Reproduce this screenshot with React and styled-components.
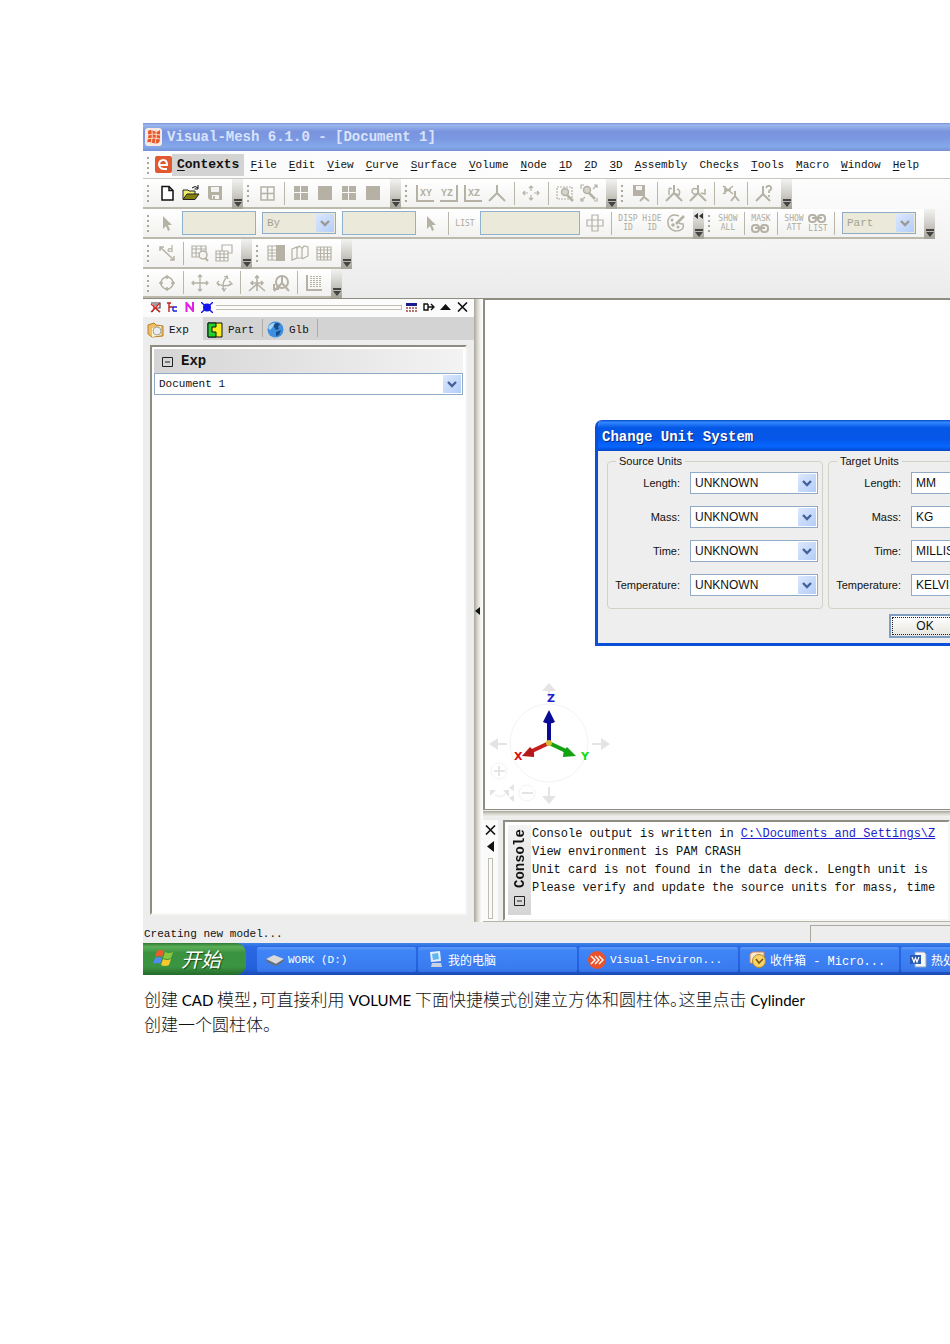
import React from "react";
import styled, { createGlobalStyle, css } from "styled-components";

const mono = `"Liberation Mono", "Noto Sans CJK SC", monospace`;
const sans = `"Liberation Sans", "Noto Sans CJK SC", sans-serif`;
const dim = "#b5b2a5";

const Global = createGlobalStyle`
  *, *::before, *::after { box-sizing: border-box; }
  body { margin: 0; background: #fff; }
  button, input, select { font: inherit; color: inherit; margin: 0; border-radius: 0; }
  svg { display: block; flex: none; }
`;

const Page = styled.main`
  padding: 123px 0 60px 143px;
  overflow: hidden;
`;

const AppWindow = styled.section`
  display: flex;
  flex-direction: column;
  overflow: hidden;
  background: #ededed;
  font-family: ${mono};
  font-size: 11px;
  color: #111;
  white-space: nowrap;
`;

const TitleBar = styled.header`
  display: flex;
  align-items: center;
  gap: 5px;
  height: 28px;
  padding-left: 2px;
  background: linear-gradient(#7f97d8, #9ab6ee 8%, #7a94de 30%, #7b98e2 55%, #84a8ea 85%, #7690d6);
  color: #d8e3fb;
  font-size: 14px;
  font-weight: bold;
`;

const Title = styled.h1`
  margin: 0;
  font: inherit;
`;

const MenuBar = styled.nav`
  display: flex;
  align-items: center;
  height: 28px;
  background: linear-gradient(90deg, #fbfbfb, #fff);
  border-bottom: 1px solid #c9c7bd;
`;

const MenuButton = styled.button`
  height: 22px;
  padding: 0 ${(p) => (p.$active ? 5 : 6)}px;
  border: 0;
  background: ${(p) => (p.$active ? "#d3d3d3" : "transparent")};
  font-size: ${(p) => (p.$active ? 13 : 11)}px;
  font-weight: ${(p) => (p.$active ? "bold" : "normal")};
  & u { text-underline-offset: 2px; }
`;

const Grip = styled.span`
  flex: none;
  width: 12px;
  height: 20px;
  background: linear-gradient(#aaa89c, #aaa89c) 4px 1px / 2px 100% no-repeat;
  mask: repeating-linear-gradient(transparent 0 2px, #000 2px 4px, transparent 4px 5px);
`;

const ToolArea = styled.div`
  display: flex;
  flex-direction: column;
  background: linear-gradient(#fdfdfd, #ebebeb);
  border-bottom: 1px solid #8f8d82;
`;

const ToolRow = styled.div`
  display: flex;
  height: 30px;
  &:last-child { height: 29px; }
`;

const Toolbar = styled.div`
  display: flex;
  align-items: center;
  flex: none;
  background: linear-gradient(#fff, #f1f1f0);
  border-bottom: 2px solid #bcb9ad;
`;

const ToolButton = styled.button`
  display: flex;
  align-items: center;
  justify-content: center;
  flex: none;
  width: 24px;
  height: 24px;
  padding: 0;
  border: 0;
  background: none;
  color: #aeab9e;
`;

const TinyLabel = styled.span`
  font-family: "DejaVu Sans Mono", monospace;
  font-size: 8px;
  line-height: 9px;
  text-align: center;
`;

const Divider = styled.span`
  flex: none;
  width: 1px;
  height: 23px;
  margin: 0 4px 0 ${(p) => (p.$wide ? 5 : 4)}px;
  background: #b9b6aa;
`;

const Overflow = styled.button`
  display: flex;
  flex-direction: column;
  align-items: center;
  justify-content: ${(p) => (p.$more ? "space-between" : "flex-end")};
  flex: none;
  align-self: stretch;
  width: 11px;
  margin-left: 5px;
  margin-bottom: -2px;
  padding: 4px 0 2px;
  border: 0;
  background: linear-gradient(#f2f2f1, #d2d1cb 45%, #a5a297);
`;

const Field = styled.input`
  flex: none;
  width: ${(p) => p.$w}px;
  height: 24px;
  margin: 0 3px;
  border: 1px solid #8fb0cf;
  background: #ebe9d9;
`;

const ComboWrap = styled.span`
  position: relative;
  display: flex;
  flex: none;
  width: ${(p) => (p.$w ? p.$w + "px" : "100%")};
  height: 22px;
  margin: 0 ${(p) => (p.$off ? 3 : 0)}px;
`;

const ComboSelect = styled.select`
  appearance: none;
  width: 100%;
  height: 100%;
  padding: 0 20px 0 4px;
  border: 1px solid #8fabc8;
  background: #fff;
  ${(p) =>
    p.disabled &&
    css`
      background: #ebe9d9;
      color: #a5a293;
      opacity: 1;
    `}
`;

const ComboArrow = styled.span`
  position: absolute;
  top: 2px;
  right: 2px;
  bottom: 2px;
  display: flex;
  align-items: center;
  justify-content: center;
  width: 18px;
  background: linear-gradient(135deg, #dce8fd, #b4cdf7);
  pointer-events: none;
`;

const Workspace = styled.div`
  display: flex;
`;

const Explorer = styled.aside`
  display: flex;
  flex-direction: column;
  flex: none;
  width: 331px;
`;

const DockBar = styled.div`
  display: flex;
  align-items: center;
  height: 18px;
  padding: 0 3px 2px 4px;
  background: #fbfbfb;
`;

const DockButton = styled.button`
  display: flex;
  justify-content: center;
  flex: none;
  width: 17px;
  padding: 0;
  border: 0;
  background: none;
`;

const DockRail = styled.span`
  flex: 1;
  height: 5px;
  margin: 0 1px 0 1px;
  border: 1px solid #c0beb3;
  border-left: 0;
`;

const Tabs = styled.div`
  display: flex;
  height: 23px;
  background: #d3d3d3;
`;

const Tab = styled.button`
  display: flex;
  align-items: center;
  gap: ${(p) => (p.$active ? 3 : 5)}px;
  width: ${(p) => p.$w}px;
  padding: 2px 0 0 4px;
  border: 0;
  background: ${(p) =>
    p.$active ? "#ededed" : "linear-gradient(#aeaca2, #aeaca2) 100% 2px / 1px 18px no-repeat"};
`;

const ExplorerFrame = styled.div`
  margin: 5px 7px 7px;
  padding: 2px;
  border: 2px solid;
  border-color: #8f8d82 #f7f7f4 #f7f7f4 #8f8d82;
  background: #fff;
`;

const SectionHeader = styled.h2`
  display: flex;
  align-items: center;
  gap: 8px;
  height: 24px;
  margin: 0;
  padding-left: 8px;
  background: linear-gradient(90deg, #d5d5d5, #f3f3f3);
  font-size: 14px;
`;

const Tree = styled.div`
  min-height: 516px;
`;

const Splitter = styled.button`
  display: flex;
  align-items: center;
  flex: none;
  width: 9px;
  padding: 0 0 0 1px;
  border: 0;
  background: linear-gradient(90deg, #a9a79b, #d9d8d0 40%, #f6f6f4 75%, #fff);
`;

const MainColumn = styled.div`
  display: flex;
  flex-direction: column;
  flex: 1;
  min-width: 0;
`;

const Viewport = styled.div`
  position: relative;
  display: flex;
  flex-direction: column;
  justify-content: flex-end;
  flex: 1;
  border: 2px solid #8f8d82;
  border-width: 1px 0 1px 2px;
  background: #fff;
  overflow: hidden;
`;

const Bar = styled.div`
  height: 6px;
  margin-top: 1px;
  background: linear-gradient(#a9a79b, #d9d8d0 50%, #f4f4f2);
`;

const ConsoleDock = styled.div`
  display: flex;
  padding-top: 3px;
  border-bottom: 1px solid #b5b3a8;
`;

const ConsoleTools = styled.div`
  display: flex;
  flex-direction: column;
  align-items: center;
  gap: 6px;
  flex: none;
  width: 15px;
  margin-right: 5px;
  padding: 5px 0 2px;
  background: #fafafa;
`;

const ConsoleRail = styled.span`
  flex: 1;
  width: 5px;
  border: 1px solid #c0beb3;
`;

const ConsoleBox = styled.div`
  display: flex;
  flex: 1;
  min-width: 0;
  padding: 3px 3px 4px;
  border: 2px solid;
  border-color: #8f8d82 #f7f7f4 #f7f7f4 #8f8d82;
  background: #fff;
  overflow: hidden;
`;

const ConsoleTab = styled.div`
  display: flex;
  align-items: center;
  justify-content: flex-start;
  gap: 8px;
  flex: none;
  width: 23px;
  padding: 8px 0 4px;
  writing-mode: vertical-rl;
  transform: rotate(180deg);
  background: linear-gradient(#d5d5d5, #f3f3f3);
  font-size: 14px;
  font-weight: bold;
`;

const Log = styled.div`
  padding-left: 1px;
  font-size: 12px;
  line-height: 18px;
  min-height: 90px;
  & p { margin: 0; }
  & a { color: #2222cc; }
`;

const Dialog = styled.div`
  position: absolute;
  top: 120px;
  left: 110px;
  right: 0;
  border: 3px solid #0a4fd8;
  border-width: 0 0 3px 3px;
  border-radius: 7px 0 0 0;
  background: #eee;
  font-family: ${sans};
  font-size: 11px;
  overflow: hidden;
`;

const DialogTitle = styled.h2`
  margin: 0;
  padding: 4px 0 0 4px;
  background: linear-gradient(#0a4ccc, #2f86ff 8%, #0558e6 25%, #0556e8 60%, #0666ff 85%, #0348cc);
  color: #fff;
  font: bold 14px/27px ${mono};
  text-shadow: 1px 1px #0a2a80;
`;

const Groups = styled.div`
  display: flex;
  gap: 5px;
  padding: 4px 9px 0;
`;

const Group = styled.fieldset`
  display: flex;
  flex-direction: column;
  gap: 12px;
  flex: none;
  width: 216px;
  min-width: 0;
  margin: 0;
  padding: 4px 4px 12px 4px;
  border: 1px solid #d3d2c6;
  border-radius: 4px;
  & legend { padding: 0 3px; margin-left: 4px; line-height: 13px; }
`;

const UnitRow = styled.div`
  display: flex;
  align-items: center;
  justify-content: flex-end;
  gap: 10px;
  & select { font-size: 12px; }
`;

const DialogActions = styled.div`
  display: flex;
  padding: 5px 0 5px 291px;
`;

const OkButton = styled.button`
  flex: none;
  width: 72px;
  height: 24px;
  border: 2px solid #7f9fc0;
  background: linear-gradient(#fff, #e6e5df);
  outline: 1px dotted #222;
  outline-offset: -4px;
  font-size: 12px;
`;

const StatusBar = styled.footer`
  display: flex;
  align-items: center;
  justify-content: space-between;
  height: 21px;
  padding: 2px 0 0 1px;
`;

const StatusCell = styled.span`
  width: 140px;
  height: 17px;
  border: 1px solid #aaa89c;
  border-width: 1px 0 0 1px;
`;

const TaskBar = styled.div`
  display: flex;
  height: 32px;
  background: linear-gradient(#3f86e4, #2a68e4 12%, #2460dc 80%, #1b49b4);
  color: #fff;
`;

const StartButton = styled.button`
  display: flex;
  align-items: center;
  gap: 6px;
  flex: none;
  width: 103px;
  margin-right: 11px;
  padding: 0 0 2px 10px;
  border: 0;
  border-radius: 0 10px 10px 0;
  background: linear-gradient(#2f7a34, #5cae58 12%, #3b9340 30%, #3a9440 75%, #256b2c);
  font: italic 20px "Noto Sans CJK SC", sans-serif;
  text-shadow: 1px 1px 1px #1c4a20;
`;

const Task = styled.button`
  display: flex;
  align-items: center;
  gap: 4px;
  flex: none;
  width: 159px;
  height: 25px;
  margin: 4px 2px 0 0;
  padding: 0 0 0 9px;
  border: 0;
  border-radius: 2px;
  background: linear-gradient(#5c9bfa, #3f84f6 15%, #3a7cf0 85%, #3472e2);
  font-size: ${(p) => (p.$cjk ? 12 : 11)}px;
`;

const Note = styled.p`
  max-width: 690px;
  margin: 11px 0 0;
  padding-left: 1px;
  color: #111;
  font: 300 17px/25px "Noto Sans CJK SC", sans-serif;
  font-feature-settings: "halt";
  & span { font: 15px Lato, sans-serif; color: #000; }
`;

const Icon = ({ children, w = 18, h = 18 }) => (
  <svg
    width={w}
    height={h}
    viewBox={`0 0 ${w} ${h}`}
    fill="none"
    stroke={dim}
    strokeWidth="1.5"
    aria-hidden="true"
  >
    {children}
  </svg>
);

const plane = (label, left) => (
  <Icon>
    <path d={left ? "M1 1V17H18" : "M17 1V17H0"} strokeWidth="2" />
    <text x={left ? 4 : 1} y="12" fontSize="10" fontWeight="bold" fill={dim} stroke="none" fontFamily="Liberation Mono">
      {label}
    </text>
  </Icon>
);

const axes = <path d="M9 1V9L1 17M9 9L17 17" strokeWidth="2" />;
const chain = (y) => (
  <g strokeWidth="2">
    <rect x="1" y={y} width="7" height="7" rx="3" />
    <rect x="10" y={y} width="7" height="7" rx="3" />
    <path d={`M4 ${y + 3}H14`} />
  </g>
);

const icons = {
  newDoc: (
    <Icon>
      <path d="M4 2.5H11L15 6.5V16H4Z" fill="#fff" stroke="#111" />
      <path d="M11 2.5V6.5H15" stroke="#111" />
    </Icon>
  ),
  open: (
    <Icon>
      <path d="M1 15V6H6L7 7H13V10" fill="#f1ee6c" stroke="#222" strokeWidth="1" />
      <path d="M1 15.500L5 10H17L13 15.500Z" fill="#83800e" stroke="#222" strokeWidth="1" />
      <path d="M10 4Q13 1 16 4M16 1V5H12.500" stroke="#111" strokeWidth="1" />
    </Icon>
  ),
  save: (
    <Icon>
      <path d="M2 2H16V16H4L2 14Z" fill={dim} stroke="none" />
      <path d="M5 3H13V8H5ZM6 11H13V15H6Z" fill="#f4f4f2" stroke="none" />
      <path d="M8 12V15" strokeWidth="2" />
    </Icon>
  ),
  window4: (
    <Icon>
      <path d="M3 3H16V16H3ZM9.500 3V16M3 9.500H16" />
    </Icon>
  ),
  tiles: (
    <Icon>
      <path d="M2 2H8V8H2ZM9 2H16V8H9ZM2 9H8V16H2ZM9 9H16V16H9Z" fill={dim} stroke="none" />
    </Icon>
  ),
  solid: (
    <Icon>
      <path d="M2 2H16V16H2Z" fill={dim} stroke="none" />
    </Icon>
  ),
  axes: <Icon>{axes}</Icon>,
  center: (
    <Icon>
      <path d="M9 2V7M7 4L9 2L11 4M9 16V11M7 14L9 16L11 14M1 9H6M3 7L1 9L3 11M17 9H12M15 7L17 9L15 11" strokeWidth="1.2" />
    </Icon>
  ),
  zoomBox: (
    <Icon>
      <path d="M1 3H16V15H1Z" strokeDasharray="2 1" strokeWidth="1.2" />
      <circle cx="9" cy="8" r="3.500" fill="#d5d3ca" />
      <path d="M11 11L17 17" strokeWidth="2.500" />
    </Icon>
  ),
  zoomAll: (
    <Icon>
      <circle cx="7" cy="6" r="3.500" fill="#d5d3ca" />
      <path d="M9 9L15 15" strokeWidth="2.500" />
      <path d="M1 5V1H4M14 1H17V4M1 14V17H4M17 14V17H14M1 17L5 13M13 5L17 1" strokeWidth="1.200" />
    </Icon>
  ),
  saveView: (
    <Icon>
      <path d="M1 1H13V12H1Z" fill={dim} stroke="none" />
      <path d="M4 2H10V6H4Z" fill="#f4f4f2" stroke="none" />
      <path d="M12 8V13L8 17M12 13L17 17" strokeWidth="2" />
    </Icon>
  ),
  rotateView: (
    <Icon>
      {axes}
      <path d="M4 11V6Q4 3 7 5M12 5Q16 6 14 11L11 10" />
    </Icon>
  ),
  rotateView2: (
    <Icon>
      {axes}
      <path d="M8 5Q3 3 3 8Q5 12 9 9M16 5V10L12 9" />
    </Icon>
  ),
  deleteView: (
    <Icon>
      <path d="M1 2L11 10M11 2L1 10M3 2V10M2 6H9" />
      <path d="M13 7V12L9 17M13 12L17 17" strokeWidth="2" />
    </Icon>
  ),
  helpView: (
    <Icon>
      <path d="M8 2V10L1 17M8 10L15 17" strokeWidth="2" />
      <path d="M11 4Q12 1 15 2Q18 5 14 7V9M14 11V13" strokeWidth="1.800" />
    </Icon>
  ),
  pointer: (
    <Icon>
      <path d="M5 2V15L8 12L10 17L12 16L10 11H14Z" fill={dim} stroke="none" />
    </Icon>
  ),
  cross: (
    <Icon>
      <path d="M6 1H12V17H6ZM1 6H17V12H1Z" strokeWidth="1.200" />
    </Icon>
  ),
  palette: (
    <Icon>
      <path d="M12 2Q4 -1 1 6Q0 15 8 17Q18 17 16 10Q11 10 11 7" />
      <path d="M17 2L9 10" strokeWidth="2.500" />
      <g fill={dim} stroke="none">
        <circle cx="5" cy="6" r="1.500" />
        <circle cx="6" cy="11" r="1.800" />
        <circle cx="11" cy="13" r="1.500" />
      </g>
    </Icon>
  ),
  measure: (
    <Icon>
      <path d="M2 3L16 16M2 7V3H6M16 12V16H12" />
      <path d="M14 1V8M14 5Q10 4 10 6.500Q11 8 14 7" strokeWidth="1.200" />
    </Icon>
  ),
  tableFind: (
    <Icon>
      <path d="M1 2H15V13H1ZM1 5H15M1 9H9M5 2V13M10 2V7" strokeWidth="1.200" />
      <circle cx="12" cy="11" r="4" fill="#f4f4f2" />
      <path d="M14 14L17 17" strokeWidth="2" />
    </Icon>
  ),
  tables: (
    <Icon>
      <path d="M7 7V1H17V9H13M1 7H13V17H1ZM1 10H13M1 13.500H13M5 7V17M9 7V17" strokeWidth="1.200" />
    </Icon>
  ),
  tableCol: (
    <Icon>
      <path d="M1 2H10V16H1ZM1 6H10M1 9H10M1 12H10M5 2V16" strokeWidth="1.200" />
      <path d="M9 1H18V17H9Z" fill={dim} stroke="none" />
    </Icon>
  ),
  sheets: (
    <Icon>
      <path d="M1 5L6 3V14L1 16ZM6 5L8 2L11 4V14L6 14M11 5L13 2L17 3V12L11 15" strokeWidth="1.200" />
    </Icon>
  ),
  table: (
    <Icon>
      <path d="M2 3H16V16H2ZM2 6H16M2 9.500H16M2 13H16M5.500 3V16M9 3V16M12.500 3V16" strokeWidth="1.200" />
    </Icon>
  ),
  orbit: (
    <Icon>
      <circle cx="9" cy="9" r="6" />
      <path d="M9 1V5M9 13V17M1 9H5M13 9H17M7 3H11M7 15H11M3 7V11M15 7V11" />
    </Icon>
  ),
  move: (
    <Icon>
      <path d="M9 1V17M1 9H17M7 3L9 1L11 3M7 15L9 17L11 15M3 7L1 9L3 11M15 7L17 9L15 11" strokeWidth="1.300" />
    </Icon>
  ),
  spin: (
    <Icon>
      <path d="M9 16Q6 9 12 3M9 3L12 2L13 5M2 9Q9 14 16 10M4 7L2 9L4 12M14 7L17 10L13 12M7 14L9 17L11 14" strokeWidth="1.300" />
    </Icon>
  ),
  axisMove: (
    <Icon>
      <path d="M9 1V10L1 17M9 10L17 17M9 10V17M3 9H15M5 7L3 9L5 11M13 7L15 9L13 11M7 4L9 2L11 4" strokeWidth="1.600" />
    </Icon>
  ),
  axisSpin: (
    <Icon>
      <circle cx="10" cy="8" r="6" strokeWidth="2" />
      <path d="M10 2V9L2 17M10 9L17 17M2 10V15H7" strokeWidth="2" />
    </Icon>
  ),
  ruler: (
    <Icon>
      <path d="M2 1V16H17" strokeWidth="2" />
      <path d="M6 2V13M9 2V13M12 2V13M15 2V13" strokeDasharray="1 1" strokeWidth="2" />
    </Icon>
  ),
};

const tiny = (...lines) => (
  <TinyLabel>
    {lines.map((l) => (
      <div key={l}>{l}</div>
    ))}
  </TinyLabel>
);

const Tool = ({ name, icon }) => <ToolButton aria-label={name}>{icon}</ToolButton>;

const OverflowButton = ({ more }) => (
  <Overflow $more={more} aria-label="More buttons">
    {more && (
      <svg width="9" height="6" viewBox="0 0 9 6">
        <path d="M4 0V6L0 3ZM9 0V6L5 3Z" fill="#333" />
      </svg>
    )}
    <svg width="8" height="8" viewBox="0 0 8 8">
      <path d="M0 0H8V2H0ZM0 3H8L4 8Z" fill="#444" />
    </svg>
  </Overflow>
);

const Bars = ({ children, more }) => (
  <Toolbar role="toolbar">
    <Grip />
    {children}
    <OverflowButton more={more} />
  </Toolbar>
);

const Combo = ({ value, w, disabled, id, label, off }) => (
  <ComboWrap $w={w} $off={off}>
    <ComboSelect id={id} aria-label={label} disabled={disabled} defaultValue={value}>
      <option>{value}</option>
    </ComboSelect>
    <ComboArrow>
      <svg width="10" height="7" viewBox="0 0 10 7">
        <path d="M1 1L5 5L9 1" fill="none" stroke={disabled ? "#9a9a92" : "#44629a"} strokeWidth="2.400" />
      </svg>
    </ComboArrow>
  </ComboWrap>
);

const menus = [
  ["File", 0], ["Edit", 0], ["View", 0], ["Curve", 0], ["Surface", 0], ["Volume", 0],
  ["Node", 0], ["1D", 0], ["2D", 0], ["3D", 0], ["Assembly", 0], ["Checks", 4],
  ["Tools", 0], ["Macro", 0], ["Window", 0], ["Help", 0],
];

const MenuItem = ({ text, at = 0, active }) => (
  <MenuButton $active={active}>
    {text.slice(0, at)}
    <u>{text[at]}</u>
    {text.slice(at + 1)}
  </MenuButton>
);

const UnitGroup = ({ title, prefix, units }) => (
  <Group>
    <legend>{title}</legend>
    {units.map(([name, value]) => (
      <UnitRow key={name}>
        <label htmlFor={prefix + name}>{name}:</label>
        <Combo id={prefix + name} value={value} w={128} />
      </UnitRow>
    ))}
  </Group>
);

const CollapseIcon = () => (
  <svg width="11" height="11" viewBox="0 0 11 11" fill="none" stroke="#222">
    <path d="M0.500 1.500H10.500V10.500H0.500ZM3 6H8" />
  </svg>
);

const CloseIcon = () => (
  <svg width="11" height="10" viewBox="0 0 11 10" stroke="#111" strokeWidth="1.600">
    <path d="M1 0.500L10 9.500M10 0.500L1 9.500" />
  </svg>
);

const Triad = () => (
  <svg width="128" height="129" viewBox="485 680 128 129" fill="none" role="img" aria-label="View axes">
    <circle cx="549" cy="743" r="39" stroke="#f3f3f3" />
    <g stroke="#e4e4e4" strokeWidth="2">
      <path d="M549 690V697M497 744H507M592 744H602M549 787V797" />
      <circle cx="499" cy="771" r="8" stroke="#f3f3f3" strokeWidth="1" />
      <circle cx="527" cy="793" r="8" stroke="#f3f3f3" strokeWidth="1" />
      <path d="M494 771H505M499 766V776M522 793H533" />
      <path d="M495 795Q502 799 507 792" stroke="#f3f3f3" />
    </g>
    <path
      d="M549 683L556 691H542ZM489 744L498 738V750ZM610 744L601 738V750ZM549 804L556 796H542ZM490 790H496L490 796ZM503 790H509V797ZM514 784V791L509 788ZM514 802V795L509 798Z"
      fill="#e4e4e4"
    />
    <path d="M549 743V719" stroke="#0a0a96" strokeWidth="4" />
    <path d="M549 710L555 722Q549 725 543 722Z" fill="#0a0a96" />
    <path d="M549 743L532 751" stroke="#c42020" strokeWidth="4" />
    <path d="M522 756L530 747Q535 751 534 757Z" fill="#b41818" />
    <path d="M549 743L566 751" stroke="#12a312" strokeWidth="4" />
    <path d="M576 756L567 747Q563 751 563 757Z" fill="#12a312" />
    <circle cx="549" cy="743" r="3" fill="#d8b92c" />
    <g fontFamily="DejaVu Sans" fontWeight="bold" fontSize="11">
      <text x="547" y="702" fill="#2222cc">Z</text>
      <text x="514" y="760" fill="#dd1111">X</text>
      <text x="581" y="760" fill="#11dd11">Y</text>
    </g>
  </svg>
);

export default function App() {
  return (
    <Page>
      <Global />
      <AppWindow>
        <TitleBar>
          <svg width="17" height="18" viewBox="0 0 17 18">
            <rect width="17" height="18" rx="3" fill="#f9e9e2" />
            <path d="M3 3Q6 1 9 3T15 2V12Q14 17 8 15T2 15Q4 9 3 3Z" fill="#e8572a" />
            <path d="M3 7Q8 5 15 7M2 11Q8 9 15 11M7 2Q8 9 6 16M11 2Q12 9 10 16" stroke="#fbd9c8" fill="none" />
          </svg>
          <Title>Visual-Mesh 6.1.0 - [Document 1]</Title>
        </TitleBar>
        <MenuBar>
          <Grip />
          <svg width="17" height="17" viewBox="0 0 17 17">
            <rect width="17" height="17" rx="2" fill="#e3592f" />
            <path d="M5 9H12Q12 4 8.500 4Q4 4 4 9Q5 13 9 13H12" fill="none" stroke="#fff" strokeWidth="2" />
          </svg>
          <MenuItem text="Contexts" active />
          {menus.map(([text, at]) => (
            <MenuItem key={text} text={text} at={at} />
          ))}
        </MenuBar>

        <ToolArea>
          <ToolRow>
            <Bars>
              <Tool name="New" icon={icons.newDoc} />
              <Tool name="Open" icon={icons.open} />
              <Tool name="Save" icon={icons.save} />
            </Bars>
            <Bars>
              <Tool name="Window layout" icon={icons.window4} />
              <Divider $wide />
              <Tool name="Four views" icon={icons.tiles} />
              <Tool name="One view" icon={icons.solid} />
              <Tool name="Split views" icon={icons.tiles} />
              <Tool name="Full view" icon={icons.solid} />
            </Bars>
            <Bars>
              <Tool name="XY plane" icon={plane("XY", true)} />
              <Tool name="YZ plane" icon={plane("YZ", false)} />
              <Tool name="XZ plane" icon={plane("XZ", true)} />
              <Tool name="Isometric" icon={icons.axes} />
              <Divider $wide />
              <Tool name="Center" icon={icons.center} />
              <Divider $wide />
              <Tool name="Zoom window" icon={icons.zoomBox} />
              <Tool name="Zoom all" icon={icons.zoomAll} />
            </Bars>
            <Bars>
              <Tool name="Save view" icon={icons.saveView} />
              <Divider />
              <Tool name="Previous view" icon={icons.rotateView} />
              <Tool name="Next view" icon={icons.rotateView2} />
              <Divider />
              <Tool name="Delete view" icon={icons.deleteView} />
              <Divider />
              <Tool name="View help" icon={icons.helpView} />
            </Bars>
          </ToolRow>
          <ToolRow>
            <Bars more>
              <Tool name="Select" icon={icons.pointer} />
              <Field $w={74} disabled aria-label="Entity" />
              <Combo value="By" w={74} disabled label="Select by" off />
              <Field $w={74} disabled aria-label="Value" />
              <Tool name="Pick" icon={icons.pointer} />
              <Divider $wide />
              <Tool name="List" icon={tiny("LIST")} />
              <Field $w={100} disabled aria-label="List entry" />
              <Tool name="Add" icon={icons.cross} />
              <Divider />
              <Tool name="Display ID" icon={tiny("DISP", "ID")} />
              <Tool name="Hide ID" icon={tiny("HiDE", "ID")} />
              <Tool name="Colors" icon={icons.palette} />
            </Bars>
            <Bars>
              <Tool name="Show all" icon={tiny("SHOW", "ALL")} />
              <Divider />
              <ToolButton aria-label="Mask">
                <TinyLabel>
                  MASK
                  <Icon h={10}>{chain(2)}</Icon>
                </TinyLabel>
              </ToolButton>
              <Divider />
              <Tool name="Show attached" icon={tiny("SHOW", "ATT")} />
              <ToolButton aria-label="Attached list">
                <TinyLabel>
                  <Icon h={10}>{chain(1)}</Icon>
                  LIST
                </TinyLabel>
              </ToolButton>
              <Divider />
              <Combo value="Part" w={74} disabled label="Entity type" off />
            </Bars>
          </ToolRow>
          <ToolRow>
            <Bars>
              <Tool name="Measure" icon={icons.measure} />
              <Divider />
              <Tool name="Find in table" icon={icons.tableFind} />
              <Tool name="Tables" icon={icons.tables} />
            </Bars>
            <Bars>
              <Tool name="Column" icon={icons.tableCol} />
              <Tool name="Sheets" icon={icons.sheets} />
              <Tool name="Table" icon={icons.table} />
            </Bars>
          </ToolRow>
          <ToolRow>
            <Bars>
              <Tool name="Orbit" icon={icons.orbit} />
              <Divider />
              <Tool name="Move" icon={icons.move} />
              <Tool name="Spin" icon={icons.spin} />
              <Divider />
              <Tool name="Move axes" icon={icons.axisMove} />
              <Tool name="Spin axes" icon={icons.axisSpin} />
              <Divider />
              <Tool name="Ruler" icon={icons.ruler} />
            </Bars>
          </ToolRow>
        </ToolArea>

        <Workspace>
          <Explorer>
            <DockBar>
              <DockButton aria-label="Clear">
                <svg width="11" height="11" viewBox="0 0 11 11" fill="none" strokeWidth="1.200">
                  <path d="M1 1H10V6H3M3 3H8M5 6L2 10M6 7L10 10" stroke="#444" />
                  <path d="M1 10L10 1M1 2L10 10" stroke="#e02020" />
                </svg>
              </DockButton>
              <DockButton aria-label="Tree">
                <svg width="11" height="11" viewBox="0 0 11 11" fill="none" strokeWidth="1.400">
                  <path d="M0 1H4M2 1V10M2 5H6" stroke="#c02020" />
                  <path d="M6 5H10M6 9H10M6 5V9" stroke="#2222dd" />
                </svg>
              </DockButton>
              <DockButton aria-label="Names">
                <svg width="10" height="10" viewBox="0 0 10 10">
                  <path d="M1.500 10V1L8 9V0" fill="none" stroke="#e41ee4" strokeWidth="2" />
                </svg>
              </DockButton>
              <DockButton aria-label="Highlight">
                <svg width="12" height="11" viewBox="0 0 12 11">
                  <circle cx="6" cy="5.500" r="4" fill="#1414ee" />
                  <path d="M0 0L12 11M12 0L0 11" stroke="#1414ee" strokeWidth="1.300" />
                </svg>
              </DockButton>
              <DockRail />
              <DockButton aria-label="Columns">
                <svg width="11" height="9" viewBox="0 0 11 9">
                  <path d="M0 0H11V3H0Z" fill="#1a1a8c" />
                  <path d="M0 5H11M0 8H11" stroke="#a04848" strokeWidth="1.500" strokeDasharray="2 1" />
                </svg>
              </DockButton>
              <DockButton aria-label="Undock">
                <svg width="12" height="8" viewBox="0 0 12 8" fill="none" stroke="#111" strokeWidth="1.400">
                  <path d="M5 1H1V7H5V1M5 4H10M8 1L11 4L8 7" />
                </svg>
              </DockButton>
              <DockButton aria-label="Collapse">
                <svg width="11" height="6" viewBox="0 0 11 6">
                  <path d="M0 6L5.500 0L11 6Z" fill="#111" />
                </svg>
              </DockButton>
              <DockButton aria-label="Close">
                <CloseIcon />
              </DockButton>
            </DockBar>
            <Tabs role="tablist">
              <Tab role="tab" $active $w={60}>
                <svg width="19" height="16" viewBox="0 0 19 16">
                  <path d="M1 3L7 1L9 3L16 4V14L5 15L1 12Z" fill="#f0bd63" stroke="#b5802c" />
                  <path d="M5 6L14 4V13L5 15Z" fill="#fff3cf" />
                  <circle cx="10" cy="9" r="4" fill="#e9eef4" stroke="#a3a3a0" />
                </svg>
                Exp
              </Tab>
              <Tab role="tab" $w={60}>
                <svg width="16" height="16" viewBox="0 0 16 16">
                  <path d="M1 1H15V15H1Z" fill="#f7ee1e" stroke="#111" />
                  <path d="M1 1H9V5H5V10H9V15H1Z" fill="#1fd32d" stroke="#111" />
                </svg>
                Part
              </Tab>
              <Tab role="tab" $w={55}>
                <svg width="17" height="17" viewBox="0 0 17 17">
                  <circle cx="8.500" cy="8.500" r="8" fill="#3d8fe0" />
                  <path d="M7 3Q10 1 13 3L11 6L12 8L9 9L7 6ZM9 11L14 9L12 14L9 15Z" fill="#1c4c86" />
                  <path d="M1 7Q3 2 8 2L5 7L3 9Z" fill="#a5d5f7" />
                </svg>
                Glb
              </Tab>
            </Tabs>
            <ExplorerFrame>
              <SectionHeader>
                <CollapseIcon /> Exp
              </SectionHeader>
              <Combo value="Document 1" label="Document" />
              <Tree role="tree" />
            </ExplorerFrame>
          </Explorer>
          <Splitter aria-label="Collapse explorer">
            <svg width="5" height="8" viewBox="0 0 5 8">
              <path d="M5 0V8L0 4Z" fill="#111" />
            </svg>
          </Splitter>
          <MainColumn>
            <Viewport>
              <Triad />
              <Dialog role="dialog" aria-label="Change Unit System">
                <DialogTitle>Change Unit System</DialogTitle>
                <Groups>
                  <UnitGroup
                    title="Source Units"
                    prefix="source"
                    units={[["Length", "UNKNOWN"], ["Mass", "UNKNOWN"], ["Time", "UNKNOWN"], ["Temperature", "UNKNOWN"]]}
                  />
                  <UnitGroup
                    title="Target Units"
                    prefix="target"
                    units={[["Length", "MM"], ["Mass", "KG"], ["Time", "MILLISECOND"], ["Temperature", "KELVIN"]]}
                  />
                </Groups>
                <DialogActions>
                  <OkButton>OK</OkButton>
                </DialogActions>
              </Dialog>
            </Viewport>
            <Bar />
            <ConsoleDock>
              <ConsoleTools>
                <CloseIcon />
                <svg width="7" height="11" viewBox="0 0 7 11">
                  <path d="M7 0V11L0 5.500Z" fill="#111" />
                </svg>
                <ConsoleRail />
              </ConsoleTools>
              <ConsoleBox>
                <ConsoleTab>
                  <CollapseIcon /> Console
                </ConsoleTab>
                <Log>
                  <p>
                    Console output is written in <a href="#log">C:\Documents and Settings\Z</a>
                  </p>
                  <p>View environment is PAM CRASH</p>
                  <p>Unit card is not found in the data deck. Length unit is</p>
                  <p>Please verify and update the source units for mass, time</p>
                </Log>
              </ConsoleBox>
            </ConsoleDock>
          </MainColumn>
        </Workspace>

        <StatusBar>
          Creating new model...
          <StatusCell />
        </StatusBar>
        <TaskBar>
          <StartButton>
            <svg width="22" height="20" viewBox="0 0 22 20">
              <path d="M4 3Q7 1 11 3L9 9Q6 7 2 9Z" fill="#ee5a2c" />
              <path d="M12 4Q16 6 20 4L18 10Q14 12 10 10Z" fill="#8cc63e" />
              <path d="M2 10Q5 8 9 10L7 16Q4 14 0 16Z" fill="#4f8df0" />
              <path d="M10 11Q14 13 18 11L16 17Q12 19 8 17Z" fill="#f7c82c" />
            </svg>
            开始
          </StartButton>
          <Task>
            <svg width="18" height="12" viewBox="0 0 18 12">
              <path d="M0 5L8 1L18 5L10 10Z" fill="#d9d9d9" />
              <path d="M0 5L10 10V12L1 8ZM10 10L18 5V7L10 12Z" fill="#6d6d6d" />
            </svg>
            WORK (D:)
          </Task>
          <Task $cjk>
            <svg width="17" height="17" viewBox="0 0 17 17">
              <path d="M3 1L13 0L14 10L4 11Z" fill="#e8eef6" />
              <path d="M5 3L11 2L12 8L6 9Z" fill="#5fb4f2" />
              <path d="M5 12H14L15 16H4Z" fill="#c9d2de" />
            </svg>
            我的电脑
          </Task>
          <Task>
            <svg width="18" height="18" viewBox="0 0 18 18">
              <circle cx="9" cy="9" r="9" fill="#e8532c" />
              <path d="M3 5L7 9L3 13M7 5L11 9L7 13M11 5L15 9L11 13" fill="none" stroke="#fff" strokeWidth="1.400" />
            </svg>
            Visual-Environ...
          </Task>
          <Task $cjk>
            <svg width="17" height="17" viewBox="0 0 17 17">
              <path d="M1 3L4 1H15V12H1Z" fill="#fbe6d2" stroke="#d2884a" />
              <circle cx="10" cy="10" r="6.500" fill="#f9d569" stroke="#b58a22" />
              <path d="M7 8L10 12L14 8" fill="none" stroke="#7a5510" strokeWidth="1.500" />
            </svg>
            收件箱 - Micro...
          </Task>
          <Task $cjk>
            <svg width="17" height="17" viewBox="0 0 17 17">
              <path d="M5 1H14L16 3V16H5Z" fill="#f4f6fa" stroke="#8ca0c4" />
              <rect y="4" width="11" height="9" fill="#2b5bb0" />
              <path d="M2 6L4 11L5.500 7L7 11L9 6" fill="none" stroke="#fff" strokeWidth="1.200" />
            </svg>
            热处
          </Task>
        </TaskBar>
      </AppWindow>
      <Note>
        创建 <span>CAD</span> 模型，可直接利用 <span>VOLUME</span> 下面快捷模式创建立方体和圆柱体。这里点击 <span>Cylinder</span>
        <br />
        创建一个圆柱体。
      </Note>
    </Page>
  );
}
